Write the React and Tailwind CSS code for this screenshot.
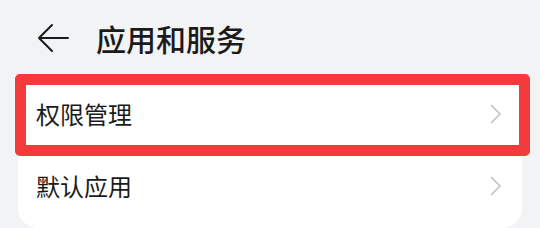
const Chevron = () => (
  <svg width="12" height="20" viewBox="0 0 12 20" fill="none">
    <path d="M1.5 1.5 L10 10 L1.5 18.5" stroke="#c4c4c4" strokeWidth="1.7" strokeLinecap="round" strokeLinejoin="round" />
  </svg>
);

const Row = ({ label }) => (
  <div className="h-[72px] flex items-center justify-between pl-[18px] pr-[20px]">
    <span className="text-[24px] text-[#1b1b1b] leading-none">{label}</span>
    <Chevron />
  </div>
);

export default function App() {
  return (
    <div
      className="w-[540px] h-[228px] bg-[#f1f3f5] overflow-hidden"
      style={{ fontFamily: '"Noto Sans CJK SC", "Noto Sans", sans-serif' }}
    >
      {/* Header */}
      <div className="h-[76px] flex items-center">
        <svg className="ml-[37px]" width="32" height="30" viewBox="0 0 32 30" fill="none">
          <path d="M2 15 H31 M15 2 L2 15 L15 28" stroke="#1b1b1b" strokeWidth="2" strokeLinecap="round" strokeLinejoin="round" />
        </svg>
        <h1 className="ml-[27px] text-[30px] font-medium text-[#1b1b1b] leading-none">应用和服务</h1>
      </div>

      {/* Card */}
      <div className="relative mx-[18px] bg-white rounded-[20px] pt-[2px] pb-[6px]">
        <Row label="权限管理" />
        <Row label="默认应用" />
        <div className="absolute left-[-3px] right-[-8px] top-[-2px] h-[82px] border-[11px] border-[#f43a3a] rounded-[5px]" />
      </div>
    </div>
  );
}
